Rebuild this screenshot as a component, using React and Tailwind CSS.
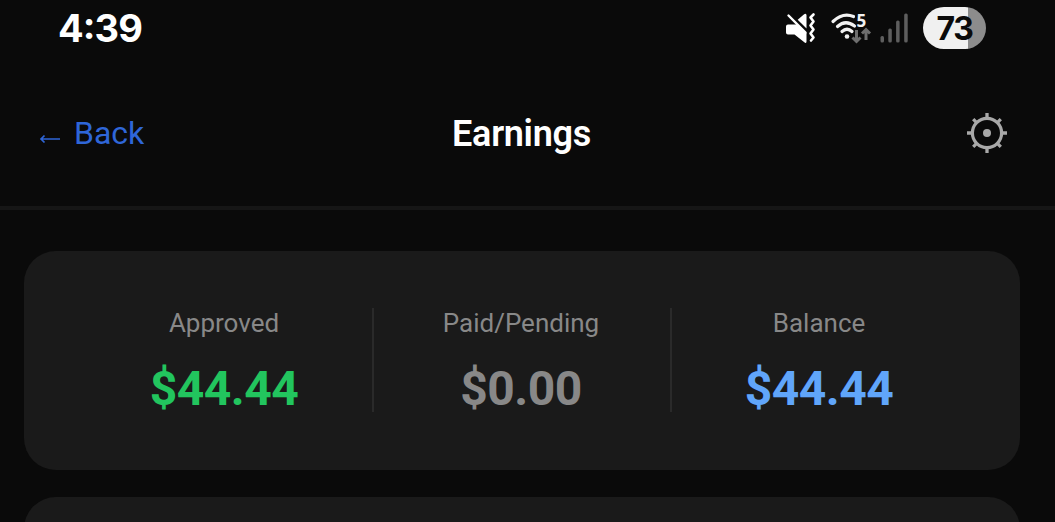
const MutedIcon = () => (
  <svg className="block shrink-0" width="32" height="34" viewBox="0 0 32 34" fill="none">
    <path d="M3 13.500H12.500L21.500 22V30.500Q21.500 33 19 31L9.500 23.500H3Q1 23.500 1 21.500v-6Q1 13.500 3 13.500z" fill="#fff" />
    <path d="M12.700 8.700L18.500 3.700Q21.500 1.500 21.500 4.500V17.500z" fill="#fff" />
    <path d="M3.500 4.500L20.500 21.700" stroke="#fff" strokeWidth="2.400" strokeLinecap="round" />
    <path d="M28.500 3.500l-3 3 3 4-3 4 3 4-3 4 3 4-2.500 3" stroke="#fff" strokeWidth="2.600" strokeLinejoin="round" strokeLinecap="round" />
  </svg>
);

const WifiIcon = () => (
  <svg className="block shrink-0 overflow-visible" width="40" height="32" viewBox="0 0 40 32" fill="none">
    <path d="M2 9.500Q12 0 22.500 4.500M6.500 14.500Q14.500 7.200 23.500 14M11 19.500Q16 15 21 19.500" stroke="#f2f2f2" strokeWidth="3.200" strokeLinecap="round" />
    <circle cx="16" cy="24.500" r="2.300" fill="#f2f2f2" />
    <text x="25.500" y="15" fill="#f2f2f2" fontFamily="Open Sans, sans-serif" fontWeight="700" fontSize="17">5</text>
    <path d="M25.500 18v11M21.500 25.500l4 4 4-4M35 28V18M31 21.500l4-4 4 4" stroke="#6e6e6e" strokeWidth="3" />
  </svg>
);

const SignalIcon = () => (
  <svg className="block shrink-0" width="30" height="32" viewBox="0 0 30 32">
    <g fill="#5e5e5e">
      <rect x="0.500" y="24" width="3.500" height="6.500" rx="1.500" />
      <rect x="8.300" y="16.500" width="3.500" height="14" rx="1.500" />
      <rect x="16.100" y="8.500" width="3.500" height="22" rx="1.500" />
      <rect x="24.200" y="1.500" width="3.500" height="29" rx="1.500" />
    </g>
  </svg>
);

const GearIcon = () => (
  <svg className="block" width="42" height="42" viewBox="-21 -21 42 42" fill="none" stroke="#a8a8a8">
    <circle r="14.600" strokeWidth="3.200" />
    <path d="M0-15v-5M0 15v5M-15 0h-5M15 0h5M10.600-10.600l3.200-3.200M10.600 10.600l3.200 3.200M-10.600 10.600l-3.200 3.200M-10.600-10.600l-3.200-3.200" strokeWidth="3.300" />
    <circle r="4" fill="#a8a8a8" stroke="none" />
  </svg>
);

const stats = [
  { label: "Approved", value: "$44.44", color: "text-[#22c55e]" },
  { label: "Paid/Pending", value: "$0.00", color: "text-[#888888]" },
  { label: "Balance", value: "$44.44", color: "text-[#60a5fa]" },
];

export default function App() {
  return (
    <div className="flex h-[522px] w-[1055px] flex-col overflow-hidden bg-[#0a0a0a] font-['Roboto',sans-serif]">
      <div className="flex h-14 shrink-0 items-center justify-between pr-[69px] pl-[58px]">
        <span className="font-['Inter',sans-serif] text-[38px] leading-[56px] font-bold tracking-[-0.9px] text-white">
          4<span className="inline-block -translate-y-[3px]">:</span>39
        </span>
        <div className="flex items-center">
          <MutedIcon />
          <div className="ml-[14px]"><WifiIcon /></div>
          <div className="ml-[9px]"><SignalIcon /></div>
          <div className="ml-[13px] flex h-[42px] w-[63px] items-center justify-center rounded-full bg-linear-to-r from-[#f0f0f0] from-[71.4%] to-[#8c8c8c] to-[71.4%] pt-px font-['Inter',sans-serif] text-[32px] leading-none font-bold tracking-[-1.300px] text-[#0a0a0a]">73</div>
        </div>
      </div>

      <header className="grid h-[154px] shrink-0 grid-cols-3 items-center border-b-4 border-[#161616] pt-1 pr-[47px] pl-[38px]">
        <button className="flex items-center gap-[11px] text-left text-[32px] leading-10 text-[#2f66d8]">
          <svg className="mt-[11px] block" width="25" height="14" viewBox="0 0 25 14" fill="none" stroke="#2f66d8" strokeWidth="1.700">
            <path d="M3 7H22M6.500 3.500L3 7 6.500 10.500" />
          </svg>
          <span>Back</span>
        </button>
        <h1 className="pt-0.5 pr-[3px] text-center text-[36px] leading-10 font-semibold tracking-[-0.3px] text-white">Earnings</h1>
        <button className="justify-self-end"><GearIcon /></button>
      </header>

      <main className="flex flex-col gap-[27px] pt-[41px] pr-[35px] pl-6">
        <section className="flex h-[219px] shrink-0 items-center rounded-[32px] bg-[#1a1a1a] pb-px pl-[52px]">
          {stats.map((s, i) => (
            <div key={s.label} className={i < 2 ? "flex h-[104px] w-[298px] flex-col items-center border-r-2 border-[#2a2a2a]" : "flex h-[104px] w-[294px] flex-col items-center"}>
              <span className={i === 1 ? "pr-0.5 text-[26px] leading-[30px] text-[#888888]" : "text-[26px] leading-[30px] text-[#888888]"}>{s.label}</span>
              <span className={`mt-[23px] text-[48px] leading-14 font-bold tracking-[-0.5px] ${i === 1 ? "pr-0.5" : ""} ${s.color}`}>{s.value}</span>
            </div>
          ))}
        </section>
        <section className="h-[219px] shrink-0 rounded-[32px] bg-[#1a1a1a]" />
      </main>
    </div>
  );
}
